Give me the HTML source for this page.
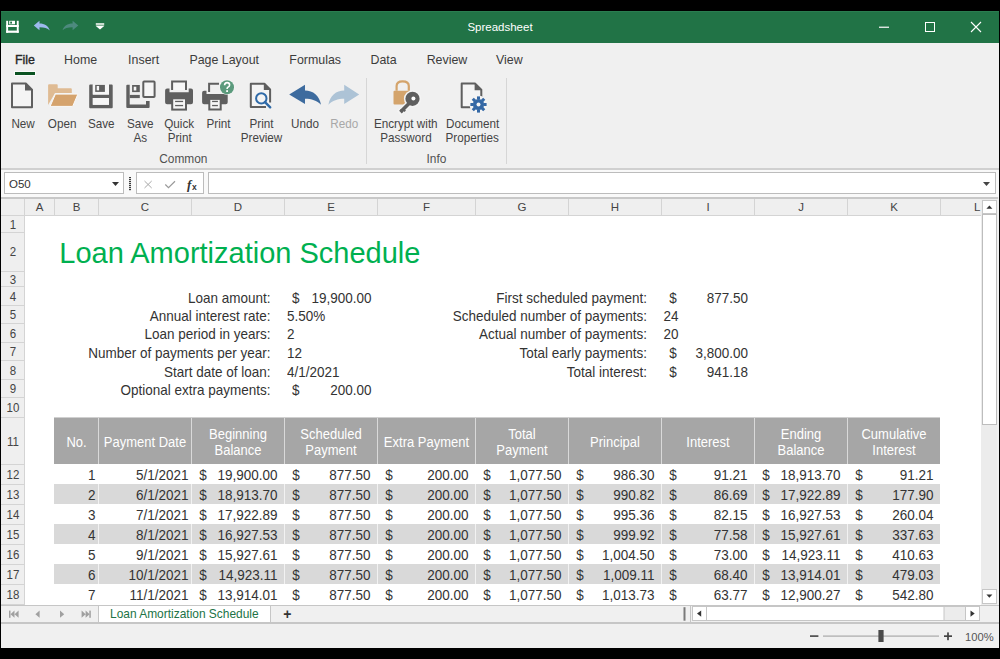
<!DOCTYPE html><html><head><meta charset="utf-8"><style>
*{margin:0;padding:0;box-sizing:border-box}
html,body{width:1000px;height:659px;overflow:hidden;background:#000;font-family:"Liberation Sans", sans-serif}
.t{position:absolute;white-space:pre}
.r{position:absolute}
svg{position:absolute;left:0;top:0}
</style></head><body><div class="r" style="left:1px;top:11px;width:998px;height:637px;background:#f0f0f0;"></div><div class="r" style="left:1px;top:11px;width:998px;height:32px;background:#217346;"></div><div class="r" style="left:1px;top:11px;width:998px;height:1px;background:#2a7d50;"></div><div class="t" style="left:200.00px;width:600px;text-align:center;top:21.77px;font-size:11.5px;line-height:11.5px;color:#ffffff;font-weight:normal;">Spreadsheet</div><div class="t" style="left:-275.00px;width:600px;text-align:center;top:53.60px;font-size:12.4px;line-height:12.4px;color:#262626;font-weight:normal;-webkit-text-stroke:0.35px #262626;">File</div><div class="t" style="left:-219.40px;width:600px;text-align:center;top:53.60px;font-size:12.4px;line-height:12.4px;color:#3c3c3c;font-weight:normal;">Home</div><div class="t" style="left:-156.40px;width:600px;text-align:center;top:53.60px;font-size:12.4px;line-height:12.4px;color:#3c3c3c;font-weight:normal;">Insert</div><div class="t" style="left:-75.80px;width:600px;text-align:center;top:53.60px;font-size:12.4px;line-height:12.4px;color:#3c3c3c;font-weight:normal;">Page Layout</div><div class="t" style="left:15.20px;width:600px;text-align:center;top:53.60px;font-size:12.4px;line-height:12.4px;color:#3c3c3c;font-weight:normal;">Formulas</div><div class="t" style="left:83.60px;width:600px;text-align:center;top:53.60px;font-size:12.4px;line-height:12.4px;color:#3c3c3c;font-weight:normal;">Data</div><div class="t" style="left:147.00px;width:600px;text-align:center;top:53.60px;font-size:12.4px;line-height:12.4px;color:#3c3c3c;font-weight:normal;">Review</div><div class="t" style="left:209.30px;width:600px;text-align:center;top:53.60px;font-size:12.4px;line-height:12.4px;color:#3c3c3c;font-weight:normal;">View</div><div class="r" style="left:15px;top:72px;width:20px;height:2.5px;background:#0b5322;box-shadow:0 0 0 1px #fafafa;"></div><div class="t" style="left:-276.90px;width:600px;text-align:center;top:117.60px;font-size:11.7px;line-height:11.7px;color:#444444;font-weight:normal;transform-origin:0 9.90px;transform:scaleY(1.11);">New</div><div class="t" style="left:-237.90px;width:600px;text-align:center;top:117.60px;font-size:11.7px;line-height:11.7px;color:#444444;font-weight:normal;transform-origin:0 9.90px;transform:scaleY(1.11);">Open</div><div class="t" style="left:-198.80px;width:600px;text-align:center;top:117.60px;font-size:11.7px;line-height:11.7px;color:#444444;font-weight:normal;transform-origin:0 9.90px;transform:scaleY(1.11);">Save</div><div class="t" style="left:-159.80px;width:600px;text-align:center;top:117.60px;font-size:11.7px;line-height:11.7px;color:#444444;font-weight:normal;transform-origin:0 9.90px;transform:scaleY(1.11);">Save</div><div class="t" style="left:-159.80px;width:600px;text-align:center;top:132.30px;font-size:11.7px;line-height:11.7px;color:#444444;font-weight:normal;transform-origin:0 9.90px;transform:scaleY(1.11);">As</div><div class="t" style="left:-120.80px;width:600px;text-align:center;top:117.60px;font-size:11.7px;line-height:11.7px;color:#444444;font-weight:normal;transform-origin:0 9.90px;transform:scaleY(1.11);">Quick</div><div class="t" style="left:-120.30px;width:600px;text-align:center;top:132.30px;font-size:11.7px;line-height:11.7px;color:#444444;font-weight:normal;transform-origin:0 9.90px;transform:scaleY(1.11);">Print</div><div class="t" style="left:-81.50px;width:600px;text-align:center;top:117.60px;font-size:11.7px;line-height:11.7px;color:#444444;font-weight:normal;transform-origin:0 9.90px;transform:scaleY(1.11);">Print</div><div class="t" style="left:-38.50px;width:600px;text-align:center;top:117.60px;font-size:11.7px;line-height:11.7px;color:#444444;font-weight:normal;transform-origin:0 9.90px;transform:scaleY(1.11);">Print</div><div class="t" style="left:-38.50px;width:600px;text-align:center;top:132.30px;font-size:11.7px;line-height:11.7px;color:#444444;font-weight:normal;transform-origin:0 9.90px;transform:scaleY(1.11);">Preview</div><div class="t" style="left:5.10px;width:600px;text-align:center;top:117.60px;font-size:11.7px;line-height:11.7px;color:#444444;font-weight:normal;transform-origin:0 9.90px;transform:scaleY(1.11);">Undo</div><div class="t" style="left:44.20px;width:600px;text-align:center;top:117.60px;font-size:11.7px;line-height:11.7px;color:#a8a8a8;font-weight:normal;transform-origin:0 9.90px;transform:scaleY(1.11);">Redo</div><div class="t" style="left:105.80px;width:600px;text-align:center;top:117.60px;font-size:11.7px;line-height:11.7px;color:#444444;font-weight:normal;transform-origin:0 9.90px;transform:scaleY(1.11);">Encrypt with</div><div class="t" style="left:106.00px;width:600px;text-align:center;top:132.30px;font-size:11.7px;line-height:11.7px;color:#444444;font-weight:normal;transform-origin:0 9.90px;transform:scaleY(1.11);">Password</div><div class="t" style="left:172.70px;width:600px;text-align:center;top:117.60px;font-size:11.7px;line-height:11.7px;color:#444444;font-weight:normal;transform-origin:0 9.90px;transform:scaleY(1.11);">Document</div><div class="t" style="left:172.20px;width:600px;text-align:center;top:132.30px;font-size:11.7px;line-height:11.7px;color:#444444;font-weight:normal;transform-origin:0 9.90px;transform:scaleY(1.11);">Properties</div><div class="t" style="left:-116.70px;width:600px;text-align:center;top:153.73px;font-size:11.9px;line-height:11.9px;color:#505050;font-weight:normal;transform-origin:0 10.07px;transform:scaleY(1.05);">Common</div><div class="t" style="left:136.40px;width:600px;text-align:center;top:153.73px;font-size:11.9px;line-height:11.9px;color:#505050;font-weight:normal;transform-origin:0 10.07px;transform:scaleY(1.05);">Info</div><div class="r" style="left:366px;top:78px;width:1px;height:86px;background:#d6d6d6;"></div><div class="r" style="left:506px;top:78px;width:1px;height:86px;background:#d6d6d6;"></div><div class="r" style="left:1px;top:169px;width:998px;height:28px;background:#f9f9f9;"></div><div class="r" style="left:1px;top:168px;width:998px;height:2px;background:#d0d0d0;"></div><div class="r" style="left:4px;top:172px;width:120px;height:22px;background:#ffffff;border:1px solid #bcbcbc;"></div><div class="t" style="left:9.00px;top:178.87px;font-size:11.5px;line-height:11.5px;color:#333333;font-weight:normal;">O50</div><div class="r" style="left:136px;top:172px;width:68px;height:22px;background:#ffffff;border:1px solid #bcbcbc;"></div><div class="r" style="left:208px;top:172px;width:788px;height:22px;background:#ffffff;border:1px solid #bcbcbc;"></div><div class="r" style="left:1px;top:197px;width:997px;height:2px;background:#c8c8c8;"></div><div class="r" style="left:1px;top:199px;width:981px;height:16px;background:#efefef;"></div><div class="r" style="left:1px;top:215px;width:24px;height:390px;background:#efefef;"></div><div class="r" style="left:25px;top:215px;width:957px;height:390px;background:#ffffff;"></div><div class="r" style="left:24.0px;top:199px;width:1px;height:16px;background:#d4d4d4"></div><div class="t" style="left:-260.50px;width:600px;text-align:center;top:201.87px;font-size:11.5px;line-height:11.5px;color:#444444;font-weight:normal;">A</div><div class="r" style="left:54.0px;top:199px;width:1px;height:16px;background:#d4d4d4"></div><div class="t" style="left:-223.50px;width:600px;text-align:center;top:201.87px;font-size:11.5px;line-height:11.5px;color:#444444;font-weight:normal;">B</div><div class="r" style="left:98.0px;top:199px;width:1px;height:16px;background:#d4d4d4"></div><div class="t" style="left:-155.00px;width:600px;text-align:center;top:201.87px;font-size:11.5px;line-height:11.5px;color:#444444;font-weight:normal;">C</div><div class="r" style="left:191.0px;top:199px;width:1px;height:16px;background:#d4d4d4"></div><div class="t" style="left:-62.00px;width:600px;text-align:center;top:201.87px;font-size:11.5px;line-height:11.5px;color:#444444;font-weight:normal;">D</div><div class="r" style="left:284.0px;top:199px;width:1px;height:16px;background:#d4d4d4"></div><div class="t" style="left:31.00px;width:600px;text-align:center;top:201.87px;font-size:11.5px;line-height:11.5px;color:#444444;font-weight:normal;">E</div><div class="r" style="left:377.0px;top:199px;width:1px;height:16px;background:#d4d4d4"></div><div class="t" style="left:126.50px;width:600px;text-align:center;top:201.87px;font-size:11.5px;line-height:11.5px;color:#444444;font-weight:normal;">F</div><div class="r" style="left:475.0px;top:199px;width:1px;height:16px;background:#d4d4d4"></div><div class="t" style="left:222.00px;width:600px;text-align:center;top:201.87px;font-size:11.5px;line-height:11.5px;color:#444444;font-weight:normal;">G</div><div class="r" style="left:568.0px;top:199px;width:1px;height:16px;background:#d4d4d4"></div><div class="t" style="left:315.00px;width:600px;text-align:center;top:201.87px;font-size:11.5px;line-height:11.5px;color:#444444;font-weight:normal;">H</div><div class="r" style="left:661.0px;top:199px;width:1px;height:16px;background:#d4d4d4"></div><div class="t" style="left:408.00px;width:600px;text-align:center;top:201.87px;font-size:11.5px;line-height:11.5px;color:#444444;font-weight:normal;">I</div><div class="r" style="left:754.0px;top:199px;width:1px;height:16px;background:#d4d4d4"></div><div class="t" style="left:501.00px;width:600px;text-align:center;top:201.87px;font-size:11.5px;line-height:11.5px;color:#444444;font-weight:normal;">J</div><div class="r" style="left:847.0px;top:199px;width:1px;height:16px;background:#d4d4d4"></div><div class="t" style="left:594.00px;width:600px;text-align:center;top:201.87px;font-size:11.5px;line-height:11.5px;color:#444444;font-weight:normal;">K</div><div class="r" style="left:940.0px;top:199px;width:1px;height:16px;background:#d4d4d4"></div><div class="t" style="left:677.30px;width:600px;text-align:center;top:201.87px;font-size:11.5px;line-height:11.5px;color:#444444;font-weight:normal;">L</div><div class="r" style="left:1px;top:214.5px;width:981px;height:1px;background:#d4d4d4;"></div><div class="r" style="left:1px;top:232px;width:24px;height:1px;background:#d4d4d4;"></div><div class="t" style="left:-287.10px;width:600px;text-align:center;top:219.97px;font-size:11.5px;line-height:11.5px;color:#444444;font-weight:normal;transform-origin:0 9.73px;transform:scaleY(1.09);">1</div><div class="r" style="left:1px;top:271px;width:24px;height:1px;background:#d4d4d4;"></div><div class="t" style="left:-287.10px;width:600px;text-align:center;top:247.17px;font-size:11.5px;line-height:11.5px;color:#444444;font-weight:normal;transform-origin:0 9.73px;transform:scaleY(1.09);">2</div><div class="r" style="left:1px;top:286px;width:24px;height:1px;background:#d4d4d4;"></div><div class="t" style="left:-287.10px;width:600px;text-align:center;top:274.97px;font-size:11.5px;line-height:11.5px;color:#444444;font-weight:normal;transform-origin:0 9.73px;transform:scaleY(1.09);">3</div><div class="r" style="left:1px;top:305px;width:24px;height:1px;background:#d4d4d4;"></div><div class="t" style="left:-287.10px;width:600px;text-align:center;top:291.92px;font-size:11.5px;line-height:11.5px;color:#444444;font-weight:normal;transform-origin:0 9.73px;transform:scaleY(1.09);">4</div><div class="r" style="left:1px;top:323px;width:24px;height:1px;background:#d4d4d4;"></div><div class="t" style="left:-287.10px;width:600px;text-align:center;top:310.27px;font-size:11.5px;line-height:11.5px;color:#444444;font-weight:normal;transform-origin:0 9.73px;transform:scaleY(1.09);">5</div><div class="r" style="left:1px;top:342px;width:24px;height:1px;background:#d4d4d4;"></div><div class="t" style="left:-287.10px;width:600px;text-align:center;top:328.57px;font-size:11.5px;line-height:11.5px;color:#444444;font-weight:normal;transform-origin:0 9.73px;transform:scaleY(1.09);">6</div><div class="r" style="left:1px;top:360px;width:24px;height:1px;background:#d4d4d4;"></div><div class="t" style="left:-287.10px;width:600px;text-align:center;top:347.17px;font-size:11.5px;line-height:11.5px;color:#444444;font-weight:normal;transform-origin:0 9.73px;transform:scaleY(1.09);">7</div><div class="r" style="left:1px;top:379px;width:24px;height:1px;background:#d4d4d4;"></div><div class="t" style="left:-287.10px;width:600px;text-align:center;top:365.82px;font-size:11.5px;line-height:11.5px;color:#444444;font-weight:normal;transform-origin:0 9.73px;transform:scaleY(1.09);">8</div><div class="r" style="left:1px;top:397px;width:24px;height:1px;background:#d4d4d4;"></div><div class="t" style="left:-287.10px;width:600px;text-align:center;top:384.27px;font-size:11.5px;line-height:11.5px;color:#444444;font-weight:normal;transform-origin:0 9.73px;transform:scaleY(1.09);">9</div><div class="r" style="left:1px;top:417px;width:24px;height:1px;background:#d4d4d4;"></div><div class="t" style="left:-287.10px;width:600px;text-align:center;top:403.37px;font-size:11.5px;line-height:11.5px;color:#444444;font-weight:normal;transform-origin:0 9.73px;transform:scaleY(1.09);">10</div><div class="r" style="left:1px;top:464px;width:24px;height:1px;background:#d4d4d4;"></div><div class="t" style="left:-287.10px;width:600px;text-align:center;top:436.72px;font-size:11.5px;line-height:11.5px;color:#444444;font-weight:normal;transform-origin:0 9.73px;transform:scaleY(1.09);">11</div><div class="r" style="left:1px;top:484px;width:24px;height:1px;background:#d4d4d4;"></div><div class="t" style="left:-287.10px;width:600px;text-align:center;top:469.97px;font-size:11.5px;line-height:11.5px;color:#444444;font-weight:normal;transform-origin:0 9.73px;transform:scaleY(1.09);">12</div><div class="r" style="left:1px;top:504px;width:24px;height:1px;background:#d4d4d4;"></div><div class="t" style="left:-287.10px;width:600px;text-align:center;top:489.97px;font-size:11.5px;line-height:11.5px;color:#444444;font-weight:normal;transform-origin:0 9.73px;transform:scaleY(1.09);">13</div><div class="r" style="left:1px;top:524px;width:24px;height:1px;background:#d4d4d4;"></div><div class="t" style="left:-287.10px;width:600px;text-align:center;top:509.97px;font-size:11.5px;line-height:11.5px;color:#444444;font-weight:normal;transform-origin:0 9.73px;transform:scaleY(1.09);">14</div><div class="r" style="left:1px;top:544px;width:24px;height:1px;background:#d4d4d4;"></div><div class="t" style="left:-287.10px;width:600px;text-align:center;top:529.97px;font-size:11.5px;line-height:11.5px;color:#444444;font-weight:normal;transform-origin:0 9.73px;transform:scaleY(1.09);">15</div><div class="r" style="left:1px;top:564px;width:24px;height:1px;background:#d4d4d4;"></div><div class="t" style="left:-287.10px;width:600px;text-align:center;top:549.97px;font-size:11.5px;line-height:11.5px;color:#444444;font-weight:normal;transform-origin:0 9.73px;transform:scaleY(1.09);">16</div><div class="r" style="left:1px;top:584px;width:24px;height:1px;background:#d4d4d4;"></div><div class="t" style="left:-287.10px;width:600px;text-align:center;top:569.97px;font-size:11.5px;line-height:11.5px;color:#444444;font-weight:normal;transform-origin:0 9.73px;transform:scaleY(1.09);">17</div><div class="r" style="left:1px;top:604px;width:24px;height:1px;background:#d4d4d4;"></div><div class="t" style="left:-287.10px;width:600px;text-align:center;top:590.22px;font-size:11.5px;line-height:11.5px;color:#444444;font-weight:normal;transform-origin:0 9.73px;transform:scaleY(1.09);">18</div><div class="r" style="left:24px;top:199px;width:1px;height:406px;background:#d4d4d4;"></div><div class="t" style="left:59.30px;top:239.45px;font-size:29px;line-height:29px;color:#00b050;font-weight:normal;">Loan Amortization Schedule</div><div class="t" style="right:729.50px;top:291.57px;font-size:13.5px;line-height:13.5px;color:#333333;font-weight:normal;transform-origin:0 11.43px;transform:scaleY(1.045);">Loan amount:</div><div class="t" style="left:292.00px;top:291.57px;font-size:13.5px;line-height:13.5px;color:#333333;font-weight:normal;transform-origin:0 11.43px;transform:scaleY(1.045);">$</div><div class="t" style="right:628.50px;top:291.57px;font-size:13.5px;line-height:13.5px;color:#333333;font-weight:normal;transform-origin:0 11.43px;transform:scaleY(1.045);">19,900.00</div><div class="t" style="right:729.50px;top:309.77px;font-size:13.5px;line-height:13.5px;color:#333333;font-weight:normal;transform-origin:0 11.43px;transform:scaleY(1.045);">Annual interest rate:</div><div class="t" style="left:287.00px;top:309.77px;font-size:13.5px;line-height:13.5px;color:#333333;font-weight:normal;transform-origin:0 11.43px;transform:scaleY(1.045);">5.50%</div><div class="t" style="right:729.50px;top:328.17px;font-size:13.5px;line-height:13.5px;color:#333333;font-weight:normal;transform-origin:0 11.43px;transform:scaleY(1.045);">Loan period in years:</div><div class="t" style="left:287.00px;top:328.17px;font-size:13.5px;line-height:13.5px;color:#333333;font-weight:normal;transform-origin:0 11.43px;transform:scaleY(1.045);">2</div><div class="t" style="right:729.50px;top:347.07px;font-size:13.5px;line-height:13.5px;color:#333333;font-weight:normal;transform-origin:0 11.43px;transform:scaleY(1.045);">Number of payments per year:</div><div class="t" style="left:287.00px;top:347.07px;font-size:13.5px;line-height:13.5px;color:#333333;font-weight:normal;transform-origin:0 11.43px;transform:scaleY(1.045);">12</div><div class="t" style="right:729.50px;top:365.57px;font-size:13.5px;line-height:13.5px;color:#333333;font-weight:normal;transform-origin:0 11.43px;transform:scaleY(1.045);">Start date of loan:</div><div class="t" style="left:287.00px;top:365.57px;font-size:13.5px;line-height:13.5px;color:#333333;font-weight:normal;transform-origin:0 11.43px;transform:scaleY(1.045);">4/1/2021</div><div class="t" style="right:729.50px;top:383.77px;font-size:13.5px;line-height:13.5px;color:#333333;font-weight:normal;transform-origin:0 11.43px;transform:scaleY(1.045);">Optional extra payments:</div><div class="t" style="left:292.00px;top:383.77px;font-size:13.5px;line-height:13.5px;color:#333333;font-weight:normal;transform-origin:0 11.43px;transform:scaleY(1.045);">$</div><div class="t" style="right:628.50px;top:383.77px;font-size:13.5px;line-height:13.5px;color:#333333;font-weight:normal;transform-origin:0 11.43px;transform:scaleY(1.045);">200.00</div><div class="t" style="right:353.00px;top:291.57px;font-size:13.5px;line-height:13.5px;color:#333333;font-weight:normal;transform-origin:0 11.43px;transform:scaleY(1.045);">First scheduled payment:</div><div class="t" style="left:669.30px;top:291.57px;font-size:13.5px;line-height:13.5px;color:#333333;font-weight:normal;transform-origin:0 11.43px;transform:scaleY(1.045);">$</div><div class="t" style="right:252.00px;top:291.57px;font-size:13.5px;line-height:13.5px;color:#333333;font-weight:normal;transform-origin:0 11.43px;transform:scaleY(1.045);">877.50</div><div class="t" style="right:353.00px;top:309.77px;font-size:13.5px;line-height:13.5px;color:#333333;font-weight:normal;transform-origin:0 11.43px;transform:scaleY(1.045);">Scheduled number of payments:</div><div class="t" style="left:663.50px;top:309.77px;font-size:13.5px;line-height:13.5px;color:#333333;font-weight:normal;transform-origin:0 11.43px;transform:scaleY(1.045);">24</div><div class="t" style="right:353.00px;top:328.17px;font-size:13.5px;line-height:13.5px;color:#333333;font-weight:normal;transform-origin:0 11.43px;transform:scaleY(1.045);">Actual number of payments:</div><div class="t" style="left:663.50px;top:328.17px;font-size:13.5px;line-height:13.5px;color:#333333;font-weight:normal;transform-origin:0 11.43px;transform:scaleY(1.045);">20</div><div class="t" style="right:353.00px;top:347.07px;font-size:13.5px;line-height:13.5px;color:#333333;font-weight:normal;transform-origin:0 11.43px;transform:scaleY(1.045);">Total early payments:</div><div class="t" style="left:669.30px;top:347.07px;font-size:13.5px;line-height:13.5px;color:#333333;font-weight:normal;transform-origin:0 11.43px;transform:scaleY(1.045);">$</div><div class="t" style="right:252.00px;top:347.07px;font-size:13.5px;line-height:13.5px;color:#333333;font-weight:normal;transform-origin:0 11.43px;transform:scaleY(1.045);">3,800.00</div><div class="t" style="right:353.00px;top:365.57px;font-size:13.5px;line-height:13.5px;color:#333333;font-weight:normal;transform-origin:0 11.43px;transform:scaleY(1.045);">Total interest:</div><div class="t" style="left:669.30px;top:365.57px;font-size:13.5px;line-height:13.5px;color:#333333;font-weight:normal;transform-origin:0 11.43px;transform:scaleY(1.045);">$</div><div class="t" style="right:252.00px;top:365.57px;font-size:13.5px;line-height:13.5px;color:#333333;font-weight:normal;transform-origin:0 11.43px;transform:scaleY(1.045);">941.18</div><div class="r" style="left:54px;top:417px;width:886px;height:1px;background:#d0d0d0;"></div><div class="r" style="left:54px;top:418px;width:886px;height:46px;background:#a6a6a6;"></div><div class="r" style="left:98.0px;top:418px;width:1px;height:46px;background:#d9d9d9;"></div><div class="r" style="left:191.0px;top:418px;width:1px;height:46px;background:#d9d9d9;"></div><div class="r" style="left:284.0px;top:418px;width:1px;height:46px;background:#d9d9d9;"></div><div class="r" style="left:377.0px;top:418px;width:1px;height:46px;background:#d9d9d9;"></div><div class="r" style="left:475.0px;top:418px;width:1px;height:46px;background:#d9d9d9;"></div><div class="r" style="left:568.0px;top:418px;width:1px;height:46px;background:#d9d9d9;"></div><div class="r" style="left:661.0px;top:418px;width:1px;height:46px;background:#d9d9d9;"></div><div class="r" style="left:754.0px;top:418px;width:1px;height:46px;background:#d9d9d9;"></div><div class="r" style="left:847.0px;top:418px;width:1px;height:46px;background:#d9d9d9;"></div><div class="t" style="left:-223.50px;width:600px;text-align:center;top:435.80px;font-size:13px;line-height:13px;color:#ffffff;font-weight:normal;transform-origin:0 11.00px;transform:scaleY(1.11);">No.</div><div class="t" style="left:-155.00px;width:600px;text-align:center;top:435.80px;font-size:13px;line-height:13px;color:#ffffff;font-weight:normal;transform-origin:0 11.00px;transform:scaleY(1.11);">Payment Date</div><div class="t" style="left:-62.00px;width:600px;text-align:center;top:427.90px;font-size:13px;line-height:13px;color:#ffffff;font-weight:normal;transform-origin:0 11.00px;transform:scaleY(1.11);">Beginning</div><div class="t" style="left:-62.00px;width:600px;text-align:center;top:444.20px;font-size:13px;line-height:13px;color:#ffffff;font-weight:normal;transform-origin:0 11.00px;transform:scaleY(1.11);">Balance</div><div class="t" style="left:31.00px;width:600px;text-align:center;top:427.90px;font-size:13px;line-height:13px;color:#ffffff;font-weight:normal;transform-origin:0 11.00px;transform:scaleY(1.11);">Scheduled</div><div class="t" style="left:31.00px;width:600px;text-align:center;top:444.20px;font-size:13px;line-height:13px;color:#ffffff;font-weight:normal;transform-origin:0 11.00px;transform:scaleY(1.11);">Payment</div><div class="t" style="left:126.50px;width:600px;text-align:center;top:435.80px;font-size:13px;line-height:13px;color:#ffffff;font-weight:normal;transform-origin:0 11.00px;transform:scaleY(1.11);">Extra Payment</div><div class="t" style="left:222.00px;width:600px;text-align:center;top:427.90px;font-size:13px;line-height:13px;color:#ffffff;font-weight:normal;transform-origin:0 11.00px;transform:scaleY(1.11);">Total</div><div class="t" style="left:222.00px;width:600px;text-align:center;top:444.20px;font-size:13px;line-height:13px;color:#ffffff;font-weight:normal;transform-origin:0 11.00px;transform:scaleY(1.11);">Payment</div><div class="t" style="left:315.00px;width:600px;text-align:center;top:435.80px;font-size:13px;line-height:13px;color:#ffffff;font-weight:normal;transform-origin:0 11.00px;transform:scaleY(1.11);">Principal</div><div class="t" style="left:408.00px;width:600px;text-align:center;top:435.80px;font-size:13px;line-height:13px;color:#ffffff;font-weight:normal;transform-origin:0 11.00px;transform:scaleY(1.11);">Interest</div><div class="t" style="left:501.00px;width:600px;text-align:center;top:427.90px;font-size:13px;line-height:13px;color:#ffffff;font-weight:normal;transform-origin:0 11.00px;transform:scaleY(1.11);">Ending</div><div class="t" style="left:501.00px;width:600px;text-align:center;top:444.20px;font-size:13px;line-height:13px;color:#ffffff;font-weight:normal;transform-origin:0 11.00px;transform:scaleY(1.11);">Balance</div><div class="t" style="left:594.00px;width:600px;text-align:center;top:427.90px;font-size:13px;line-height:13px;color:#ffffff;font-weight:normal;transform-origin:0 11.00px;transform:scaleY(1.11);">Cumulative</div><div class="t" style="left:594.00px;width:600px;text-align:center;top:444.20px;font-size:13px;line-height:13px;color:#ffffff;font-weight:normal;transform-origin:0 11.00px;transform:scaleY(1.11);">Interest</div><div class="t" style="right:904.50px;top:469.07px;font-size:13.5px;line-height:13.5px;color:#333333;font-weight:normal;transform-origin:0 11.43px;transform:scaleY(1.045);">1</div><div class="t" style="right:811.50px;top:469.07px;font-size:13.5px;line-height:13.5px;color:#333333;font-weight:normal;transform-origin:0 11.43px;transform:scaleY(1.045);">5/1/2021</div><div class="t" style="left:199.30px;top:469.07px;font-size:13.5px;line-height:13.5px;color:#333333;font-weight:normal;transform-origin:0 11.43px;transform:scaleY(1.045);">$</div><div class="t" style="right:722.50px;top:469.07px;font-size:13.5px;line-height:13.5px;color:#333333;font-weight:normal;transform-origin:0 11.43px;transform:scaleY(1.045);">19,900.00</div><div class="t" style="left:292.30px;top:469.07px;font-size:13.5px;line-height:13.5px;color:#333333;font-weight:normal;transform-origin:0 11.43px;transform:scaleY(1.045);">$</div><div class="t" style="right:629.50px;top:469.07px;font-size:13.5px;line-height:13.5px;color:#333333;font-weight:normal;transform-origin:0 11.43px;transform:scaleY(1.045);">877.50</div><div class="t" style="left:385.30px;top:469.07px;font-size:13.5px;line-height:13.5px;color:#333333;font-weight:normal;transform-origin:0 11.43px;transform:scaleY(1.045);">$</div><div class="t" style="right:531.50px;top:469.07px;font-size:13.5px;line-height:13.5px;color:#333333;font-weight:normal;transform-origin:0 11.43px;transform:scaleY(1.045);">200.00</div><div class="t" style="left:483.30px;top:469.07px;font-size:13.5px;line-height:13.5px;color:#333333;font-weight:normal;transform-origin:0 11.43px;transform:scaleY(1.045);">$</div><div class="t" style="right:438.50px;top:469.07px;font-size:13.5px;line-height:13.5px;color:#333333;font-weight:normal;transform-origin:0 11.43px;transform:scaleY(1.045);">1,077.50</div><div class="t" style="left:576.30px;top:469.07px;font-size:13.5px;line-height:13.5px;color:#333333;font-weight:normal;transform-origin:0 11.43px;transform:scaleY(1.045);">$</div><div class="t" style="right:345.50px;top:469.07px;font-size:13.5px;line-height:13.5px;color:#333333;font-weight:normal;transform-origin:0 11.43px;transform:scaleY(1.045);">986.30</div><div class="t" style="left:669.30px;top:469.07px;font-size:13.5px;line-height:13.5px;color:#333333;font-weight:normal;transform-origin:0 11.43px;transform:scaleY(1.045);">$</div><div class="t" style="right:252.50px;top:469.07px;font-size:13.5px;line-height:13.5px;color:#333333;font-weight:normal;transform-origin:0 11.43px;transform:scaleY(1.045);">91.21</div><div class="t" style="left:762.30px;top:469.07px;font-size:13.5px;line-height:13.5px;color:#333333;font-weight:normal;transform-origin:0 11.43px;transform:scaleY(1.045);">$</div><div class="t" style="right:159.50px;top:469.07px;font-size:13.5px;line-height:13.5px;color:#333333;font-weight:normal;transform-origin:0 11.43px;transform:scaleY(1.045);">18,913.70</div><div class="t" style="left:855.30px;top:469.07px;font-size:13.5px;line-height:13.5px;color:#333333;font-weight:normal;transform-origin:0 11.43px;transform:scaleY(1.045);">$</div><div class="t" style="right:66.50px;top:469.07px;font-size:13.5px;line-height:13.5px;color:#333333;font-weight:normal;transform-origin:0 11.43px;transform:scaleY(1.045);">91.21</div><div class="r" style="left:54px;top:484px;width:886px;height:20px;background:#d9d9d9;"></div><div class="r" style="left:98.0px;top:484px;width:1px;height:20px;background:#f2f2f2;"></div><div class="r" style="left:191.0px;top:484px;width:1px;height:20px;background:#f2f2f2;"></div><div class="r" style="left:284.0px;top:484px;width:1px;height:20px;background:#f2f2f2;"></div><div class="r" style="left:377.0px;top:484px;width:1px;height:20px;background:#f2f2f2;"></div><div class="r" style="left:475.0px;top:484px;width:1px;height:20px;background:#f2f2f2;"></div><div class="r" style="left:568.0px;top:484px;width:1px;height:20px;background:#f2f2f2;"></div><div class="r" style="left:661.0px;top:484px;width:1px;height:20px;background:#f2f2f2;"></div><div class="r" style="left:754.0px;top:484px;width:1px;height:20px;background:#f2f2f2;"></div><div class="r" style="left:847.0px;top:484px;width:1px;height:20px;background:#f2f2f2;"></div><div class="t" style="right:904.50px;top:489.07px;font-size:13.5px;line-height:13.5px;color:#333333;font-weight:normal;transform-origin:0 11.43px;transform:scaleY(1.045);">2</div><div class="t" style="right:811.50px;top:489.07px;font-size:13.5px;line-height:13.5px;color:#333333;font-weight:normal;transform-origin:0 11.43px;transform:scaleY(1.045);">6/1/2021</div><div class="t" style="left:199.30px;top:489.07px;font-size:13.5px;line-height:13.5px;color:#333333;font-weight:normal;transform-origin:0 11.43px;transform:scaleY(1.045);">$</div><div class="t" style="right:722.50px;top:489.07px;font-size:13.5px;line-height:13.5px;color:#333333;font-weight:normal;transform-origin:0 11.43px;transform:scaleY(1.045);">18,913.70</div><div class="t" style="left:292.30px;top:489.07px;font-size:13.5px;line-height:13.5px;color:#333333;font-weight:normal;transform-origin:0 11.43px;transform:scaleY(1.045);">$</div><div class="t" style="right:629.50px;top:489.07px;font-size:13.5px;line-height:13.5px;color:#333333;font-weight:normal;transform-origin:0 11.43px;transform:scaleY(1.045);">877.50</div><div class="t" style="left:385.30px;top:489.07px;font-size:13.5px;line-height:13.5px;color:#333333;font-weight:normal;transform-origin:0 11.43px;transform:scaleY(1.045);">$</div><div class="t" style="right:531.50px;top:489.07px;font-size:13.5px;line-height:13.5px;color:#333333;font-weight:normal;transform-origin:0 11.43px;transform:scaleY(1.045);">200.00</div><div class="t" style="left:483.30px;top:489.07px;font-size:13.5px;line-height:13.5px;color:#333333;font-weight:normal;transform-origin:0 11.43px;transform:scaleY(1.045);">$</div><div class="t" style="right:438.50px;top:489.07px;font-size:13.5px;line-height:13.5px;color:#333333;font-weight:normal;transform-origin:0 11.43px;transform:scaleY(1.045);">1,077.50</div><div class="t" style="left:576.30px;top:489.07px;font-size:13.5px;line-height:13.5px;color:#333333;font-weight:normal;transform-origin:0 11.43px;transform:scaleY(1.045);">$</div><div class="t" style="right:345.50px;top:489.07px;font-size:13.5px;line-height:13.5px;color:#333333;font-weight:normal;transform-origin:0 11.43px;transform:scaleY(1.045);">990.82</div><div class="t" style="left:669.30px;top:489.07px;font-size:13.5px;line-height:13.5px;color:#333333;font-weight:normal;transform-origin:0 11.43px;transform:scaleY(1.045);">$</div><div class="t" style="right:252.50px;top:489.07px;font-size:13.5px;line-height:13.5px;color:#333333;font-weight:normal;transform-origin:0 11.43px;transform:scaleY(1.045);">86.69</div><div class="t" style="left:762.30px;top:489.07px;font-size:13.5px;line-height:13.5px;color:#333333;font-weight:normal;transform-origin:0 11.43px;transform:scaleY(1.045);">$</div><div class="t" style="right:159.50px;top:489.07px;font-size:13.5px;line-height:13.5px;color:#333333;font-weight:normal;transform-origin:0 11.43px;transform:scaleY(1.045);">17,922.89</div><div class="t" style="left:855.30px;top:489.07px;font-size:13.5px;line-height:13.5px;color:#333333;font-weight:normal;transform-origin:0 11.43px;transform:scaleY(1.045);">$</div><div class="t" style="right:66.50px;top:489.07px;font-size:13.5px;line-height:13.5px;color:#333333;font-weight:normal;transform-origin:0 11.43px;transform:scaleY(1.045);">177.90</div><div class="t" style="right:904.50px;top:509.07px;font-size:13.5px;line-height:13.5px;color:#333333;font-weight:normal;transform-origin:0 11.43px;transform:scaleY(1.045);">3</div><div class="t" style="right:811.50px;top:509.07px;font-size:13.5px;line-height:13.5px;color:#333333;font-weight:normal;transform-origin:0 11.43px;transform:scaleY(1.045);">7/1/2021</div><div class="t" style="left:199.30px;top:509.07px;font-size:13.5px;line-height:13.5px;color:#333333;font-weight:normal;transform-origin:0 11.43px;transform:scaleY(1.045);">$</div><div class="t" style="right:722.50px;top:509.07px;font-size:13.5px;line-height:13.5px;color:#333333;font-weight:normal;transform-origin:0 11.43px;transform:scaleY(1.045);">17,922.89</div><div class="t" style="left:292.30px;top:509.07px;font-size:13.5px;line-height:13.5px;color:#333333;font-weight:normal;transform-origin:0 11.43px;transform:scaleY(1.045);">$</div><div class="t" style="right:629.50px;top:509.07px;font-size:13.5px;line-height:13.5px;color:#333333;font-weight:normal;transform-origin:0 11.43px;transform:scaleY(1.045);">877.50</div><div class="t" style="left:385.30px;top:509.07px;font-size:13.5px;line-height:13.5px;color:#333333;font-weight:normal;transform-origin:0 11.43px;transform:scaleY(1.045);">$</div><div class="t" style="right:531.50px;top:509.07px;font-size:13.5px;line-height:13.5px;color:#333333;font-weight:normal;transform-origin:0 11.43px;transform:scaleY(1.045);">200.00</div><div class="t" style="left:483.30px;top:509.07px;font-size:13.5px;line-height:13.5px;color:#333333;font-weight:normal;transform-origin:0 11.43px;transform:scaleY(1.045);">$</div><div class="t" style="right:438.50px;top:509.07px;font-size:13.5px;line-height:13.5px;color:#333333;font-weight:normal;transform-origin:0 11.43px;transform:scaleY(1.045);">1,077.50</div><div class="t" style="left:576.30px;top:509.07px;font-size:13.5px;line-height:13.5px;color:#333333;font-weight:normal;transform-origin:0 11.43px;transform:scaleY(1.045);">$</div><div class="t" style="right:345.50px;top:509.07px;font-size:13.5px;line-height:13.5px;color:#333333;font-weight:normal;transform-origin:0 11.43px;transform:scaleY(1.045);">995.36</div><div class="t" style="left:669.30px;top:509.07px;font-size:13.5px;line-height:13.5px;color:#333333;font-weight:normal;transform-origin:0 11.43px;transform:scaleY(1.045);">$</div><div class="t" style="right:252.50px;top:509.07px;font-size:13.5px;line-height:13.5px;color:#333333;font-weight:normal;transform-origin:0 11.43px;transform:scaleY(1.045);">82.15</div><div class="t" style="left:762.30px;top:509.07px;font-size:13.5px;line-height:13.5px;color:#333333;font-weight:normal;transform-origin:0 11.43px;transform:scaleY(1.045);">$</div><div class="t" style="right:159.50px;top:509.07px;font-size:13.5px;line-height:13.5px;color:#333333;font-weight:normal;transform-origin:0 11.43px;transform:scaleY(1.045);">16,927.53</div><div class="t" style="left:855.30px;top:509.07px;font-size:13.5px;line-height:13.5px;color:#333333;font-weight:normal;transform-origin:0 11.43px;transform:scaleY(1.045);">$</div><div class="t" style="right:66.50px;top:509.07px;font-size:13.5px;line-height:13.5px;color:#333333;font-weight:normal;transform-origin:0 11.43px;transform:scaleY(1.045);">260.04</div><div class="r" style="left:54px;top:524px;width:886px;height:20px;background:#d9d9d9;"></div><div class="r" style="left:98.0px;top:524px;width:1px;height:20px;background:#f2f2f2;"></div><div class="r" style="left:191.0px;top:524px;width:1px;height:20px;background:#f2f2f2;"></div><div class="r" style="left:284.0px;top:524px;width:1px;height:20px;background:#f2f2f2;"></div><div class="r" style="left:377.0px;top:524px;width:1px;height:20px;background:#f2f2f2;"></div><div class="r" style="left:475.0px;top:524px;width:1px;height:20px;background:#f2f2f2;"></div><div class="r" style="left:568.0px;top:524px;width:1px;height:20px;background:#f2f2f2;"></div><div class="r" style="left:661.0px;top:524px;width:1px;height:20px;background:#f2f2f2;"></div><div class="r" style="left:754.0px;top:524px;width:1px;height:20px;background:#f2f2f2;"></div><div class="r" style="left:847.0px;top:524px;width:1px;height:20px;background:#f2f2f2;"></div><div class="t" style="right:904.50px;top:529.07px;font-size:13.5px;line-height:13.5px;color:#333333;font-weight:normal;transform-origin:0 11.43px;transform:scaleY(1.045);">4</div><div class="t" style="right:811.50px;top:529.07px;font-size:13.5px;line-height:13.5px;color:#333333;font-weight:normal;transform-origin:0 11.43px;transform:scaleY(1.045);">8/1/2021</div><div class="t" style="left:199.30px;top:529.07px;font-size:13.5px;line-height:13.5px;color:#333333;font-weight:normal;transform-origin:0 11.43px;transform:scaleY(1.045);">$</div><div class="t" style="right:722.50px;top:529.07px;font-size:13.5px;line-height:13.5px;color:#333333;font-weight:normal;transform-origin:0 11.43px;transform:scaleY(1.045);">16,927.53</div><div class="t" style="left:292.30px;top:529.07px;font-size:13.5px;line-height:13.5px;color:#333333;font-weight:normal;transform-origin:0 11.43px;transform:scaleY(1.045);">$</div><div class="t" style="right:629.50px;top:529.07px;font-size:13.5px;line-height:13.5px;color:#333333;font-weight:normal;transform-origin:0 11.43px;transform:scaleY(1.045);">877.50</div><div class="t" style="left:385.30px;top:529.07px;font-size:13.5px;line-height:13.5px;color:#333333;font-weight:normal;transform-origin:0 11.43px;transform:scaleY(1.045);">$</div><div class="t" style="right:531.50px;top:529.07px;font-size:13.5px;line-height:13.5px;color:#333333;font-weight:normal;transform-origin:0 11.43px;transform:scaleY(1.045);">200.00</div><div class="t" style="left:483.30px;top:529.07px;font-size:13.5px;line-height:13.5px;color:#333333;font-weight:normal;transform-origin:0 11.43px;transform:scaleY(1.045);">$</div><div class="t" style="right:438.50px;top:529.07px;font-size:13.5px;line-height:13.5px;color:#333333;font-weight:normal;transform-origin:0 11.43px;transform:scaleY(1.045);">1,077.50</div><div class="t" style="left:576.30px;top:529.07px;font-size:13.5px;line-height:13.5px;color:#333333;font-weight:normal;transform-origin:0 11.43px;transform:scaleY(1.045);">$</div><div class="t" style="right:345.50px;top:529.07px;font-size:13.5px;line-height:13.5px;color:#333333;font-weight:normal;transform-origin:0 11.43px;transform:scaleY(1.045);">999.92</div><div class="t" style="left:669.30px;top:529.07px;font-size:13.5px;line-height:13.5px;color:#333333;font-weight:normal;transform-origin:0 11.43px;transform:scaleY(1.045);">$</div><div class="t" style="right:252.50px;top:529.07px;font-size:13.5px;line-height:13.5px;color:#333333;font-weight:normal;transform-origin:0 11.43px;transform:scaleY(1.045);">77.58</div><div class="t" style="left:762.30px;top:529.07px;font-size:13.5px;line-height:13.5px;color:#333333;font-weight:normal;transform-origin:0 11.43px;transform:scaleY(1.045);">$</div><div class="t" style="right:159.50px;top:529.07px;font-size:13.5px;line-height:13.5px;color:#333333;font-weight:normal;transform-origin:0 11.43px;transform:scaleY(1.045);">15,927.61</div><div class="t" style="left:855.30px;top:529.07px;font-size:13.5px;line-height:13.5px;color:#333333;font-weight:normal;transform-origin:0 11.43px;transform:scaleY(1.045);">$</div><div class="t" style="right:66.50px;top:529.07px;font-size:13.5px;line-height:13.5px;color:#333333;font-weight:normal;transform-origin:0 11.43px;transform:scaleY(1.045);">337.63</div><div class="t" style="right:904.50px;top:549.07px;font-size:13.5px;line-height:13.5px;color:#333333;font-weight:normal;transform-origin:0 11.43px;transform:scaleY(1.045);">5</div><div class="t" style="right:811.50px;top:549.07px;font-size:13.5px;line-height:13.5px;color:#333333;font-weight:normal;transform-origin:0 11.43px;transform:scaleY(1.045);">9/1/2021</div><div class="t" style="left:199.30px;top:549.07px;font-size:13.5px;line-height:13.5px;color:#333333;font-weight:normal;transform-origin:0 11.43px;transform:scaleY(1.045);">$</div><div class="t" style="right:722.50px;top:549.07px;font-size:13.5px;line-height:13.5px;color:#333333;font-weight:normal;transform-origin:0 11.43px;transform:scaleY(1.045);">15,927.61</div><div class="t" style="left:292.30px;top:549.07px;font-size:13.5px;line-height:13.5px;color:#333333;font-weight:normal;transform-origin:0 11.43px;transform:scaleY(1.045);">$</div><div class="t" style="right:629.50px;top:549.07px;font-size:13.5px;line-height:13.5px;color:#333333;font-weight:normal;transform-origin:0 11.43px;transform:scaleY(1.045);">877.50</div><div class="t" style="left:385.30px;top:549.07px;font-size:13.5px;line-height:13.5px;color:#333333;font-weight:normal;transform-origin:0 11.43px;transform:scaleY(1.045);">$</div><div class="t" style="right:531.50px;top:549.07px;font-size:13.5px;line-height:13.5px;color:#333333;font-weight:normal;transform-origin:0 11.43px;transform:scaleY(1.045);">200.00</div><div class="t" style="left:483.30px;top:549.07px;font-size:13.5px;line-height:13.5px;color:#333333;font-weight:normal;transform-origin:0 11.43px;transform:scaleY(1.045);">$</div><div class="t" style="right:438.50px;top:549.07px;font-size:13.5px;line-height:13.5px;color:#333333;font-weight:normal;transform-origin:0 11.43px;transform:scaleY(1.045);">1,077.50</div><div class="t" style="left:576.30px;top:549.07px;font-size:13.5px;line-height:13.5px;color:#333333;font-weight:normal;transform-origin:0 11.43px;transform:scaleY(1.045);">$</div><div class="t" style="right:345.50px;top:549.07px;font-size:13.5px;line-height:13.5px;color:#333333;font-weight:normal;transform-origin:0 11.43px;transform:scaleY(1.045);">1,004.50</div><div class="t" style="left:669.30px;top:549.07px;font-size:13.5px;line-height:13.5px;color:#333333;font-weight:normal;transform-origin:0 11.43px;transform:scaleY(1.045);">$</div><div class="t" style="right:252.50px;top:549.07px;font-size:13.5px;line-height:13.5px;color:#333333;font-weight:normal;transform-origin:0 11.43px;transform:scaleY(1.045);">73.00</div><div class="t" style="left:762.30px;top:549.07px;font-size:13.5px;line-height:13.5px;color:#333333;font-weight:normal;transform-origin:0 11.43px;transform:scaleY(1.045);">$</div><div class="t" style="right:159.50px;top:549.07px;font-size:13.5px;line-height:13.5px;color:#333333;font-weight:normal;transform-origin:0 11.43px;transform:scaleY(1.045);">14,923.11</div><div class="t" style="left:855.30px;top:549.07px;font-size:13.5px;line-height:13.5px;color:#333333;font-weight:normal;transform-origin:0 11.43px;transform:scaleY(1.045);">$</div><div class="t" style="right:66.50px;top:549.07px;font-size:13.5px;line-height:13.5px;color:#333333;font-weight:normal;transform-origin:0 11.43px;transform:scaleY(1.045);">410.63</div><div class="r" style="left:54px;top:564px;width:886px;height:20px;background:#d9d9d9;"></div><div class="r" style="left:98.0px;top:564px;width:1px;height:20px;background:#f2f2f2;"></div><div class="r" style="left:191.0px;top:564px;width:1px;height:20px;background:#f2f2f2;"></div><div class="r" style="left:284.0px;top:564px;width:1px;height:20px;background:#f2f2f2;"></div><div class="r" style="left:377.0px;top:564px;width:1px;height:20px;background:#f2f2f2;"></div><div class="r" style="left:475.0px;top:564px;width:1px;height:20px;background:#f2f2f2;"></div><div class="r" style="left:568.0px;top:564px;width:1px;height:20px;background:#f2f2f2;"></div><div class="r" style="left:661.0px;top:564px;width:1px;height:20px;background:#f2f2f2;"></div><div class="r" style="left:754.0px;top:564px;width:1px;height:20px;background:#f2f2f2;"></div><div class="r" style="left:847.0px;top:564px;width:1px;height:20px;background:#f2f2f2;"></div><div class="t" style="right:904.50px;top:569.07px;font-size:13.5px;line-height:13.5px;color:#333333;font-weight:normal;transform-origin:0 11.43px;transform:scaleY(1.045);">6</div><div class="t" style="right:811.50px;top:569.07px;font-size:13.5px;line-height:13.5px;color:#333333;font-weight:normal;transform-origin:0 11.43px;transform:scaleY(1.045);">10/1/2021</div><div class="t" style="left:199.30px;top:569.07px;font-size:13.5px;line-height:13.5px;color:#333333;font-weight:normal;transform-origin:0 11.43px;transform:scaleY(1.045);">$</div><div class="t" style="right:722.50px;top:569.07px;font-size:13.5px;line-height:13.5px;color:#333333;font-weight:normal;transform-origin:0 11.43px;transform:scaleY(1.045);">14,923.11</div><div class="t" style="left:292.30px;top:569.07px;font-size:13.5px;line-height:13.5px;color:#333333;font-weight:normal;transform-origin:0 11.43px;transform:scaleY(1.045);">$</div><div class="t" style="right:629.50px;top:569.07px;font-size:13.5px;line-height:13.5px;color:#333333;font-weight:normal;transform-origin:0 11.43px;transform:scaleY(1.045);">877.50</div><div class="t" style="left:385.30px;top:569.07px;font-size:13.5px;line-height:13.5px;color:#333333;font-weight:normal;transform-origin:0 11.43px;transform:scaleY(1.045);">$</div><div class="t" style="right:531.50px;top:569.07px;font-size:13.5px;line-height:13.5px;color:#333333;font-weight:normal;transform-origin:0 11.43px;transform:scaleY(1.045);">200.00</div><div class="t" style="left:483.30px;top:569.07px;font-size:13.5px;line-height:13.5px;color:#333333;font-weight:normal;transform-origin:0 11.43px;transform:scaleY(1.045);">$</div><div class="t" style="right:438.50px;top:569.07px;font-size:13.5px;line-height:13.5px;color:#333333;font-weight:normal;transform-origin:0 11.43px;transform:scaleY(1.045);">1,077.50</div><div class="t" style="left:576.30px;top:569.07px;font-size:13.5px;line-height:13.5px;color:#333333;font-weight:normal;transform-origin:0 11.43px;transform:scaleY(1.045);">$</div><div class="t" style="right:345.50px;top:569.07px;font-size:13.5px;line-height:13.5px;color:#333333;font-weight:normal;transform-origin:0 11.43px;transform:scaleY(1.045);">1,009.11</div><div class="t" style="left:669.30px;top:569.07px;font-size:13.5px;line-height:13.5px;color:#333333;font-weight:normal;transform-origin:0 11.43px;transform:scaleY(1.045);">$</div><div class="t" style="right:252.50px;top:569.07px;font-size:13.5px;line-height:13.5px;color:#333333;font-weight:normal;transform-origin:0 11.43px;transform:scaleY(1.045);">68.40</div><div class="t" style="left:762.30px;top:569.07px;font-size:13.5px;line-height:13.5px;color:#333333;font-weight:normal;transform-origin:0 11.43px;transform:scaleY(1.045);">$</div><div class="t" style="right:159.50px;top:569.07px;font-size:13.5px;line-height:13.5px;color:#333333;font-weight:normal;transform-origin:0 11.43px;transform:scaleY(1.045);">13,914.01</div><div class="t" style="left:855.30px;top:569.07px;font-size:13.5px;line-height:13.5px;color:#333333;font-weight:normal;transform-origin:0 11.43px;transform:scaleY(1.045);">$</div><div class="t" style="right:66.50px;top:569.07px;font-size:13.5px;line-height:13.5px;color:#333333;font-weight:normal;transform-origin:0 11.43px;transform:scaleY(1.045);">479.03</div><div class="t" style="right:904.50px;top:589.07px;font-size:13.5px;line-height:13.5px;color:#333333;font-weight:normal;transform-origin:0 11.43px;transform:scaleY(1.045);">7</div><div class="t" style="right:811.50px;top:589.07px;font-size:13.5px;line-height:13.5px;color:#333333;font-weight:normal;transform-origin:0 11.43px;transform:scaleY(1.045);">11/1/2021</div><div class="t" style="left:199.30px;top:589.07px;font-size:13.5px;line-height:13.5px;color:#333333;font-weight:normal;transform-origin:0 11.43px;transform:scaleY(1.045);">$</div><div class="t" style="right:722.50px;top:589.07px;font-size:13.5px;line-height:13.5px;color:#333333;font-weight:normal;transform-origin:0 11.43px;transform:scaleY(1.045);">13,914.01</div><div class="t" style="left:292.30px;top:589.07px;font-size:13.5px;line-height:13.5px;color:#333333;font-weight:normal;transform-origin:0 11.43px;transform:scaleY(1.045);">$</div><div class="t" style="right:629.50px;top:589.07px;font-size:13.5px;line-height:13.5px;color:#333333;font-weight:normal;transform-origin:0 11.43px;transform:scaleY(1.045);">877.50</div><div class="t" style="left:385.30px;top:589.07px;font-size:13.5px;line-height:13.5px;color:#333333;font-weight:normal;transform-origin:0 11.43px;transform:scaleY(1.045);">$</div><div class="t" style="right:531.50px;top:589.07px;font-size:13.5px;line-height:13.5px;color:#333333;font-weight:normal;transform-origin:0 11.43px;transform:scaleY(1.045);">200.00</div><div class="t" style="left:483.30px;top:589.07px;font-size:13.5px;line-height:13.5px;color:#333333;font-weight:normal;transform-origin:0 11.43px;transform:scaleY(1.045);">$</div><div class="t" style="right:438.50px;top:589.07px;font-size:13.5px;line-height:13.5px;color:#333333;font-weight:normal;transform-origin:0 11.43px;transform:scaleY(1.045);">1,077.50</div><div class="t" style="left:576.30px;top:589.07px;font-size:13.5px;line-height:13.5px;color:#333333;font-weight:normal;transform-origin:0 11.43px;transform:scaleY(1.045);">$</div><div class="t" style="right:345.50px;top:589.07px;font-size:13.5px;line-height:13.5px;color:#333333;font-weight:normal;transform-origin:0 11.43px;transform:scaleY(1.045);">1,013.73</div><div class="t" style="left:669.30px;top:589.07px;font-size:13.5px;line-height:13.5px;color:#333333;font-weight:normal;transform-origin:0 11.43px;transform:scaleY(1.045);">$</div><div class="t" style="right:252.50px;top:589.07px;font-size:13.5px;line-height:13.5px;color:#333333;font-weight:normal;transform-origin:0 11.43px;transform:scaleY(1.045);">63.77</div><div class="t" style="left:762.30px;top:589.07px;font-size:13.5px;line-height:13.5px;color:#333333;font-weight:normal;transform-origin:0 11.43px;transform:scaleY(1.045);">$</div><div class="t" style="right:159.50px;top:589.07px;font-size:13.5px;line-height:13.5px;color:#333333;font-weight:normal;transform-origin:0 11.43px;transform:scaleY(1.045);">12,900.27</div><div class="t" style="left:855.30px;top:589.07px;font-size:13.5px;line-height:13.5px;color:#333333;font-weight:normal;transform-origin:0 11.43px;transform:scaleY(1.045);">$</div><div class="t" style="right:66.50px;top:589.07px;font-size:13.5px;line-height:13.5px;color:#333333;font-weight:normal;transform-origin:0 11.43px;transform:scaleY(1.045);">542.80</div><div class="r" style="left:981px;top:199px;width:16px;height:406px;background:#ececec;"></div><div class="r" style="left:982px;top:200px;width:15px;height:14px;background:#ffffff;border:1px solid #c6c6c6;"></div><div class="r" style="left:982px;top:214px;width:15px;height:211px;background:#ffffff;border:1px solid #bdbdbd;"></div><div class="r" style="left:982px;top:589px;width:15px;height:15px;background:#ffffff;border:1px solid #c6c6c6;"></div><div class="r" style="left:1px;top:604.5px;width:998px;height:1px;background:#c6c6c6;"></div><div class="r" style="left:1px;top:605.5px;width:98px;height:17px;background:#f0f0f0;border-right:1px solid #c6c6c6;"></div><div class="r" style="left:98.5px;top:605.5px;width:172px;height:17px;background:#ffffff;border-right:1px solid #c6c6c6;"></div><div class="t" style="left:110.00px;top:608.88px;font-size:11.95px;line-height:11.95px;color:#217346;font-weight:normal;">Loan Amortization Schedule</div><div class="t" style="left:-12.70px;width:600px;text-align:center;top:606.65px;font-size:14px;line-height:14px;color:#333333;font-weight:bold;">+</div><div class="r" style="left:1px;top:622px;width:998px;height:2px;background:#c6c6c6;"></div><div class="t" style="left:965.00px;top:631.52px;font-size:11.2px;line-height:11.2px;color:#555555;font-weight:normal;">100%</div><svg width="1000" height="659" viewBox="0 0 1000 659"><g fill="#fff"><rect x="6.2" y="20.8" width="1.9" height="12"/><rect x="16.8" y="20.8" width="1.9" height="12"/><rect x="6.2" y="25" width="12.5" height="2"/><rect x="6.2" y="30.6" width="12.5" height="2.2"/><rect x="9.2" y="20.8" width="5.8" height="3.5"/></g><rect x="10.2" y="21.6" width="1.8" height="2" fill="#217346"/><path d="M33.8,25.5 L39.5,20.7 V23.5 C44.5,23.5 48.5,26 49.8,30.6 C47.5,28.3 44.5,27.3 39.5,27.3 V30.3 Z" fill="#9db9ee"/><path d="M78.3,25.5 L72.6,20.8 V23.5 C67.6,23.5 63.6,26 62.6,30.3 C64.6,28.3 67.6,27.3 72.6,27.3 V30.3 Z" fill="#4d8a7e"/><rect x="95.8" y="23" width="8.4" height="2.6" fill="#c8dccf"/><path d="M95.8,26 H104.2 L100,29.4 Z" fill="#fff"/><rect x="879" y="26.6" width="10" height="1.3" fill="#f0f0f0"/><rect x="925.5" y="22.5" width="9" height="9" fill="none" stroke="#fff" stroke-width="1"/><path d="M971,22 L981,32 M981,22 L971,32" stroke="#fff" stroke-width="1.1"/><path d="M12,83.4 H25.8 L32,89.6 V107.2 H12 Z" fill="#f4f4f4" stroke="#5f5f5f" stroke-width="2" stroke-linejoin="round"/><path d="M25,83 V90.4 H32.4 Z" fill="#5f5f5f"/><path d="M48.1,85.3 Q48.1,84.3 49.1,84.3 H56.8 Q57.7,84.3 57.7,85.3 V88.2 H70.8 Q71.8,88.2 71.8,89.2 V93 H55 L48.1,105 Z" fill="#dfbb93"/><path d="M55.4,94.1 H77.9 L72.7,106.4 H50.1 Z" fill="#d5a36d" stroke="#fafafa" stroke-width="1"/><path fill-rule="evenodd" fill="#5f5f5f" d="M89.2,85.6 Q89.2,84.6 90.2,84.6 H111.7 Q112.7,84.6 112.7,85.6 V107.2 Q112.7,108.2 111.7,108.2 H90.2 Q89.2,108.2 89.2,107.2 Z M92.8,84.6 H109 V94.6 H92.8 Z M92.8,98 H109 V104.8 H92.8 Z"/><rect x="92.8" y="98" width="16.2" height="6.8" fill="#f6f6f6"/><rect x="92.8" y="84.6" width="16.2" height="10" fill="#f6f6f6"/><rect x="95.2" y="84.9" width="9.7" height="7" fill="#5f5f5f"/><rect x="96.7" y="86" width="2.4" height="4.4" fill="#f6f6f6"/><path fill="#5f5f5f" d="M126.3,85.7 Q126.3,84.7 127.3,84.7 H129.7 V104.4 H146 V100.9 H149.6 V107 Q149.6,108 148.6,108 H127.3 Q126.3,108 126.3,107 Z"/><rect x="129.7" y="94.9" width="10.1" height="3.2" fill="#5f5f5f"/><rect x="132.1" y="85" width="7.7" height="7.1" fill="#5f5f5f"/><rect x="133.7" y="86.7" width="2.6" height="3.8" fill="#f6f6f6"/><rect x="143.3" y="81.6" width="11.3" height="15.5" rx="0.8" fill="#f6f6f6" stroke="#5f5f5f" stroke-width="2"/><path d="M172.1,90.1 V81.5 H186 V90.1" fill="#f6f6f6" stroke="#5f5f5f" stroke-width="2"/><path fill="#5f5f5f" d="M165.1,90.4 Q165.1,88.4 167.1,88.4 H169.5 V92.3 H188.7 V88.4 H191 Q193,88.4 193,90.4 V102.3 Q193,104.3 191,104.3 H167.1 Q165.1,104.3 165.1,102.3 Z"/><rect x="172.2" y="98.3" width="13.8" height="11.3" fill="#f6f6f6" stroke="#5f5f5f" stroke-width="2"/><rect x="175.1" y="100.8" width="8" height="1.3" fill="#5f5f5f"/><rect x="175.1" y="104.9" width="8" height="1.3" fill="#5f5f5f"/><path d="M209.1,92.1 V83.8 H219" fill="none" stroke="#5f5f5f" stroke-width="2"/><path fill="#5f5f5f" d="M202.1,92.7 Q202.1,90.7 204.1,90.7 H206.5 V94 H227.7 V102.2 Q227.7,104.2 225.7,104.2 H204.1 Q202.1,104.2 202.1,102.2 Z"/><rect x="209.3" y="98.9" width="11.4" height="10.6" fill="#f6f6f6" stroke="#5f5f5f" stroke-width="2"/><rect x="212.1" y="100.8" width="5.8" height="1.3" fill="#5f5f5f"/><rect x="212.1" y="104.9" width="5.8" height="1.3" fill="#5f5f5f"/><circle cx="227" cy="87.2" r="7.6" fill="#f4f4f4"/><circle cx="227" cy="87.2" r="7" fill="#5b9a7c"/><path d="M224.6,85.3 Q224.6,82.6 227.1,82.6 Q229.6,82.6 229.6,85 Q229.6,86.6 227.9,87.3 Q227.1,87.7 227.1,89" fill="none" stroke="#fff" stroke-width="1.6"/><rect x="226.2" y="90.2" width="1.8" height="1.8" fill="#fff"/><path d="M266,107 H250.8 V83.7 H264.4 L270.1,89.4 V102.5" fill="#f4f4f4" stroke="#5f5f5f" stroke-width="2" stroke-linejoin="round"/><path d="M263.8,83.2 V90.1 H270.7 Z" fill="#5f5f5f"/><circle cx="261.3" cy="98.4" r="5.2" fill="#f4f4f4" stroke="#2f6aa8" stroke-width="2"/><path d="M265,102.1 L270.2,107.3" stroke="#2f6aa8" stroke-width="2.4" stroke-linecap="round"/><path d="M289.2,94.4 L305,84.8 V90.4 C313,90.4 319.5,95.5 321,104.8 C317,100.5 311.5,98.8 305,98.8 V104 Z" fill="#3d6b9e"/><path d="M359.2,94.4 L344.2,84.8 V90.4 C336.2,90.4 329.9,95.5 328.4,104.8 C332.4,100.5 337.9,98.8 344.2,98.8 V104 Z" fill="#adc3d6"/><path d="M396.6,90.8 V86 Q396.6,81.4 402.6,81.4 Q408.8,81.4 408.8,86 V90.8" fill="none" stroke="#d4a46c" stroke-width="2.2"/><rect x="393.5" y="90.7" width="16.4" height="13.8" rx="1" fill="#d4a46c"/><circle cx="412.5" cy="98.8" r="8.6" fill="#f4f4f4"/><path d="M409,103.5 L401.2,111.3" stroke="#f4f4f4" stroke-width="6.2" stroke-linecap="square"/><path d="M409,103.5 L401.2,111.3" stroke="#5f5f5f" stroke-width="3.6" stroke-linecap="butt"/><path d="M399.9,110 L402.5,112.6" stroke="#5f5f5f" stroke-width="2.2"/><path d="M403.2,109.3 L405.2,111.3" stroke="#5f5f5f" stroke-width="2"/><circle cx="412.5" cy="98.8" r="7.1" fill="#5f5f5f"/><circle cx="413.4" cy="98.5" r="2" fill="#fff"/><path d="M471,107.3 H461.7 V83.6 H475.2 L481.3,89.7 V97" fill="#f4f4f4" stroke="#5f5f5f" stroke-width="2" stroke-linejoin="round"/><path d="M474.6,83.1 V90.3 H481.8 Z" fill="#5f5f5f"/><circle cx="478.5" cy="104.5" r="9" fill="#f4f4f4"/><rect x="483.60" y="103.00" width="3" height="3" transform="rotate(0 485.10 104.50)" fill="#3468a5"/><rect x="481.67" y="107.67" width="3" height="3" transform="rotate(45 483.17 109.17)" fill="#3468a5"/><rect x="477.00" y="109.60" width="3" height="3" transform="rotate(90 478.50 111.10)" fill="#3468a5"/><rect x="472.33" y="107.67" width="3" height="3" transform="rotate(135 473.83 109.17)" fill="#3468a5"/><rect x="470.40" y="103.00" width="3" height="3" transform="rotate(180 471.90 104.50)" fill="#3468a5"/><rect x="472.33" y="98.33" width="3" height="3" transform="rotate(225 473.83 99.83)" fill="#3468a5"/><rect x="477.00" y="96.40" width="3" height="3" transform="rotate(270 478.50 97.90)" fill="#3468a5"/><rect x="481.67" y="98.33" width="3" height="3" transform="rotate(315 483.17 99.83)" fill="#3468a5"/><circle cx="478.5" cy="104.5" r="5.6" fill="#3468a5"/><circle cx="478.5" cy="104.5" r="2" fill="#f4f4f4"/><path d="M112,182 H119 L115.5,186 Z" fill="#333"/><rect x="129" y="177" width="2" height="1.2" fill="#3a3a3a"/><rect x="129" y="179" width="2" height="1.2" fill="#3a3a3a"/><rect x="129" y="181" width="2" height="1.2" fill="#3a3a3a"/><rect x="129" y="183" width="2" height="1.2" fill="#3a3a3a"/><rect x="129" y="185" width="2" height="1.2" fill="#3a3a3a"/><rect x="129" y="187" width="2" height="1.2" fill="#3a3a3a"/><rect x="129" y="189" width="2" height="1.2" fill="#3a3a3a"/><path d="M144.5,181 L151.7,188 M151.7,181 L144.5,188" stroke="#a8a8a8" stroke-width="1"/><path d="M165.3,184.5 L168.5,187.6 L175,181.2" fill="none" stroke="#9a9a9a" stroke-width="1.2"/><text x="187" y="189" font-family="Liberation Serif" font-style="italic" font-weight="bold" font-size="13" fill="#333">f</text><text x="192" y="189.5" font-family="Liberation Sans" font-weight="bold" font-size="8.5" fill="#333">x</text><path d="M983,182 H990 L986.5,186 Z" fill="#444"/><path d="M986.4,208.7 H992.4 L989.4,205.5 Z" fill="#333"/><path d="M986.4,594.5 H992.4 L989.4,597.7 Z" fill="#333"/><g fill="#a0a0a0"><rect x="9" y="610.6" width="1.5" height="7.2"/><path d="M10.5,614.2 L14.5,610.6 V617.8 Z M14.6,614.2 L18.6,610.6 V617.8 Z"/><path d="M35.4,614.2 L39.6,610.6 V617.8 Z"/><path d="M64.2,614.2 L60,610.6 V617.8 Z"/><path d="M81.6,610.6 L85.6,614.2 L81.6,617.8 Z M85.6,610.6 L89.6,614.2 L85.6,617.8 Z"/><rect x="89.3" y="610.6" width="1.5" height="7.2"/></g><rect x="683.5" y="607.2" width="2" height="13.5" fill="#7a7a7a"/><rect x="690" y="605.5" width="1" height="17" fill="#c6c6c6"/><rect x="692.5" y="606.5" width="287" height="14" fill="#ececec" stroke="#c6c6c6" stroke-width="1"/><rect x="692.5" y="606.5" width="14" height="14" fill="#fff" stroke="#c6c6c6" stroke-width="1"/><rect x="706.5" y="606.5" width="237.5" height="14" fill="#fff" stroke="#c6c6c6" stroke-width="1"/><rect x="965.5" y="606.5" width="14" height="14" fill="#fff" stroke="#c6c6c6" stroke-width="1"/><path d="M701.2,610.5 V616.8 L697,613.6 Z" fill="#333"/><path d="M970.5,610.5 V616.8 L974.7,613.6 Z" fill="#333"/><rect x="810" y="635.3" width="8.4" height="1.6" fill="#444"/><rect x="823" y="635.5" width="116" height="1.2" fill="#a8a8a8"/><rect x="878.4" y="630" width="5.2" height="12" fill="#4a4a4a"/><rect x="944" y="635.3" width="8" height="1.7" fill="#444"/><rect x="947.15" y="632.4" width="1.7" height="7.8" fill="#444"/></svg></body></html>
